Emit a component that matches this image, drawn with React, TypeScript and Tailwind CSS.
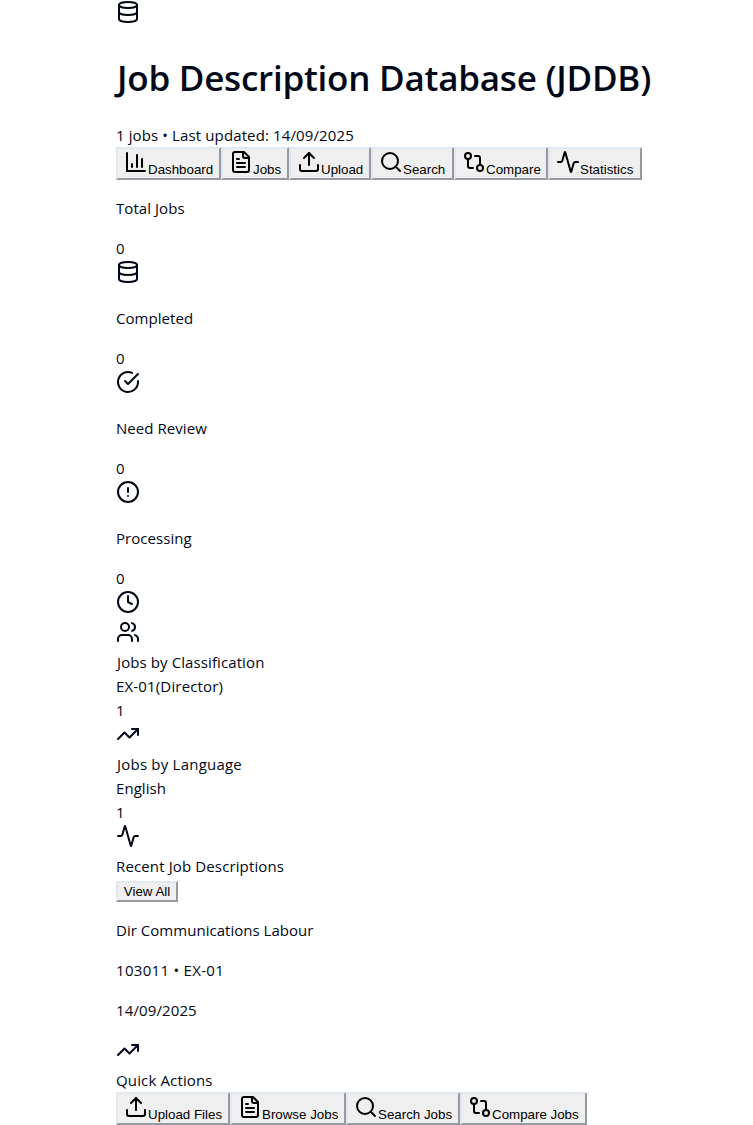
import React from "react";
import {
  Activity,
  CircleAlert,
  Clock,
  Database,
  GitCompare,
  Search,
  TrendingUp,
  Upload,
  Users,
} from "lucide-react";

type IconProps = { size?: number; className?: string };
type IconType = React.ComponentType<IconProps>;

function Stroked({ size = 24, className, children }: IconProps & { children: React.ReactNode }) {
  return (
    <svg
      width={size}
      height={size}
      viewBox="0 0 24 24"
      fill="none"
      stroke="currentColor"
      strokeWidth="2"
      strokeLinecap="round"
      strokeLinejoin="round"
      className={className}
    >
      {children}
    </svg>
  );
}

function BarChart(props: IconProps) {
  return (
    <Stroked {...props}>
      <path d="M3 3v18h18" />
      <path d="M18 17V9" />
      <path d="M13 17V5" />
      <path d="M8 17v-3" />
    </Stroked>
  );
}

function FileText(props: IconProps) {
  return (
    <Stroked {...props}>
      <path d="M15 2H6a2 2 0 0 0-2 2v16a2 2 0 0 0 2 2h12a2 2 0 0 0 2-2V7Z" />
      <path d="M14 2v4a2 2 0 0 0 2 2h4" />
      <path d="M10 9H8" />
      <path d="M16 13H8" />
      <path d="M16 17H8" />
    </Stroked>
  );
}

function CheckCircle(props: IconProps) {
  return (
    <Stroked {...props}>
      <path d="M22 11.08V12a10 10 0 1 1-5.93-9.14" />
      <path d="m9 11 3 3L22 4" />
    </Stroked>
  );
}

function NavButton({ icon: Icon, label, width }: { icon: IconType; label: string; width: string }) {
  return (
    <button
      className={`${width} flex h-[33px] shrink-0 items-start border-2 border-t-[#e2e8f0] border-r-[#96999f] border-b-[#96999f] border-l-[#e2e8f0] bg-[#efefef] pt-px pl-1.5 font-['Liberation_Sans',Arial,sans-serif] text-[13.333px] leading-[15px] tracking-normal text-black`}
    >
      <Icon size={24} className="shrink-0" />
      <span className="mt-3 whitespace-nowrap">{label}</span>
    </button>
  );
}

function IconRow({ icon: Icon }: { icon: IconType }) {
  return (
    <div className="h-[30px]">
      <Icon size={24} />
    </div>
  );
}

function Stat({ label, icon }: { label: string; icon: IconType }) {
  return (
    <div className="pt-4">
      <p className="mb-4">{label}</p>
      <p>0</p>
      <IconRow icon={icon} />
    </div>
  );
}

export default function App() {
  return (
    <div className="h-[1125px] overflow-hidden bg-white pl-[116px] font-['Open_Sans','Noto_Sans',sans-serif] text-[15px] leading-6 tracking-[0.06px] text-[#020817]">
      <header>
        <IconRow icon={Database} />
        <h1 className="mt-6 mb-[21px] h-12 pl-px text-[35px] leading-[47px] font-semibold tracking-[-0.24px] whitespace-nowrap">
          Job Description Database (JDDB)
        </h1>
        <p className="h-6 tracking-[0.12px]">1 jobs • Last updated: 14/09/2025</p>
      </header>
      <nav className="flex">
        <NavButton width="w-[105px]" icon={BarChart} label="Dashboard" />
        <NavButton width="w-[68px]" icon={FileText} label="Jobs" />
        <NavButton width="w-[82px]" icon={Upload} label="Upload" />
        <NavButton width="w-[83px]" icon={Search} label="Search" />
        <NavButton width="w-[94px]" icon={GitCompare} label="Compare" />
        <NavButton width="w-[94px]" icon={Activity} label="Statistics" />
      </nav>
      <main>
        <Stat label="Total Jobs" icon={Database} />
        <Stat label="Completed" icon={CheckCircle} />
        <Stat label="Need Review" icon={CircleAlert} />
        <Stat label="Processing" icon={Clock} />
        <section>
          <IconRow icon={Users} />
          <p className="pl-px tracking-[0.1px]">Jobs by Classification</p>
          <p className="tracking-[0.16px]">EX-01(Director)</p>
          <p>1</p>
        </section>
        <section>
          <IconRow icon={TrendingUp} />
          <p className="pl-px tracking-[0.22px]">Jobs by Language</p>
          <p>English</p>
          <p>1</p>
        </section>
        <section>
          <IconRow icon={Activity} />
          <p className="tracking-[0.13px]">Recent Job Descriptions</p>
          <button className="mt-[3px] block h-[21px] w-[62px] border-2 border-t-[#e2e8f0] border-r-[#96999f] border-b-[#96999f] border-l-[#e2e8f0] bg-[#efefef] font-['Liberation_Sans',Arial,sans-serif] text-[13.333px] leading-[17px] tracking-normal whitespace-nowrap text-black">
            View All
          </button>
          <p className="mt-4 tracking-[0.03px]">Dir Communications Labour</p>
          <p className="mt-4 tracking-[0.3px]">103011 • EX-01</p>
          <p className="mt-4 mb-4 tracking-[0.12px]">14/09/2025</p>
        </section>
        <section>
          <IconRow icon={TrendingUp} />
          <p className="tracking-[0.14px]">Quick Actions</p>
          <div className="flex">
            <NavButton width="w-[114px]" icon={Upload} label="Upload Files" />
            <NavButton width="w-[116px]" icon={FileText} label="Browse Jobs" />
            <NavButton width="w-[114px]" icon={Search} label="Search Jobs" />
            <NavButton width="w-[127px]" icon={GitCompare} label="Compare Jobs" />
          </div>
        </section>
      </main>
    </div>
  );
}
